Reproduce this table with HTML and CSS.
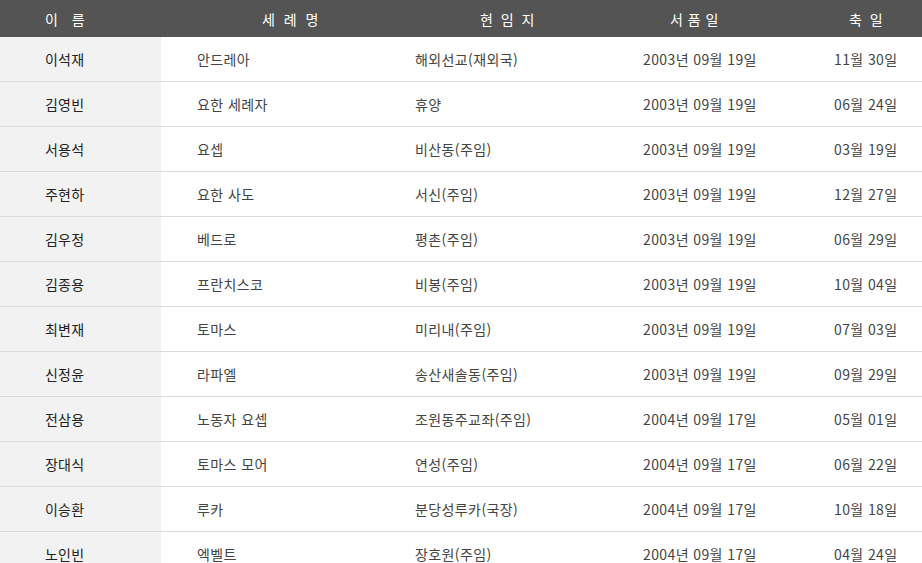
FILE: index.html
```html
<!DOCTYPE html>
<html lang="ko">
<head>
<meta charset="utf-8">
<title>명단</title>
<link rel="stylesheet" href="styles.css">
</head>
<body>
<div class="list">
  <div class="row head">
    <div class="c c1">이 름</div>
    <div class="c c2">세 례 명</div>
    <div class="c c3">현 임 지</div>
    <div class="c c4">서 품 일</div>
    <div class="c c5">축 일</div>
  </div>
  <div class="row"><div class="c c1">이석재</div><div class="c">안드레아</div><div class="c">해외선교(재외국)</div><div class="c">2003년 09월 19일</div><div class="c">11월 30일</div></div>
  <div class="row"><div class="c c1">김영빈</div><div class="c">요한 세례자</div><div class="c">휴양</div><div class="c">2003년 09월 19일</div><div class="c">06월 24일</div></div>
  <div class="row"><div class="c c1">서용석</div><div class="c">요셉</div><div class="c">비산동(주임)</div><div class="c">2003년 09월 19일</div><div class="c">03월 19일</div></div>
  <div class="row"><div class="c c1">주현하</div><div class="c">요한 사도</div><div class="c">서신(주임)</div><div class="c">2003년 09월 19일</div><div class="c">12월 27일</div></div>
  <div class="row"><div class="c c1">김우정</div><div class="c">베드로</div><div class="c">평촌(주임)</div><div class="c">2003년 09월 19일</div><div class="c">06월 29일</div></div>
  <div class="row"><div class="c c1">김종용</div><div class="c">프란치스코</div><div class="c">비봉(주임)</div><div class="c">2003년 09월 19일</div><div class="c">10월 04일</div></div>
  <div class="row"><div class="c c1">최변재</div><div class="c">토마스</div><div class="c">미리내(주임)</div><div class="c">2003년 09월 19일</div><div class="c">07월 03일</div></div>
  <div class="row"><div class="c c1">신정윤</div><div class="c">라파엘</div><div class="c">송산새솔동(주임)</div><div class="c">2003년 09월 19일</div><div class="c">09월 29일</div></div>
  <div class="row"><div class="c c1">전삼용</div><div class="c">노동자 요셉</div><div class="c">조원동주교좌(주임)</div><div class="c">2004년 09월 17일</div><div class="c">05월 01일</div></div>
  <div class="row"><div class="c c1">장대식</div><div class="c">토마스 모어</div><div class="c">연성(주임)</div><div class="c">2004년 09월 17일</div><div class="c">06월 22일</div></div>
  <div class="row"><div class="c c1">이승환</div><div class="c">루카</div><div class="c">분당성루카(국장)</div><div class="c">2004년 09월 17일</div><div class="c">10월 18일</div></div>
  <div class="row"><div class="c c1">노인빈</div><div class="c">엑벨트</div><div class="c">장호원(주임)</div><div class="c">2004년 09월 17일</div><div class="c">04월 24일</div></div>
</div>
</body>
</html>
```
FILE: styles.css
```css
html, body {
  margin: 0;
  padding: 0;
  background: #fff;
  overflow: hidden;
}
body {
  font-family: "Noto Sans CJK KR", "Noto Sans", sans-serif;
  font-size: 14px;
  color: #444;
}
.list {
  width: 922px;
}
.row {
  display: grid;
  grid-template-columns: 161px 218px 228px 191px 124px;
  height: 44px;
  border-bottom: 1px solid #dcdcdc;
}
.c {
  display: flex;
  align-items: center;
  padding-left: 36px;
  white-space: nowrap;
  line-height: 1;
  letter-spacing: 0.4px;
}
.c1 {
  background: #f2f2f2;
  padding-left: 45px;
  color: #222;
  letter-spacing: 0.2px;
}
.head {
  height: 37px;
  border-bottom: 0;
  background: #545454;
}
.head .c {
  color: #fff;
  background: transparent;
  letter-spacing: 2px;
}
.head .c1 { padding-left: 45px; letter-spacing: 5px; }
.head .c2 { padding-left: 101px; letter-spacing: 2.5px; }
.head .c3 { padding-left: 101px; }
.head .c4 { padding-left: 63px; letter-spacing: 0.5px; }
.head .c5 { padding-left: 51px; }
```
